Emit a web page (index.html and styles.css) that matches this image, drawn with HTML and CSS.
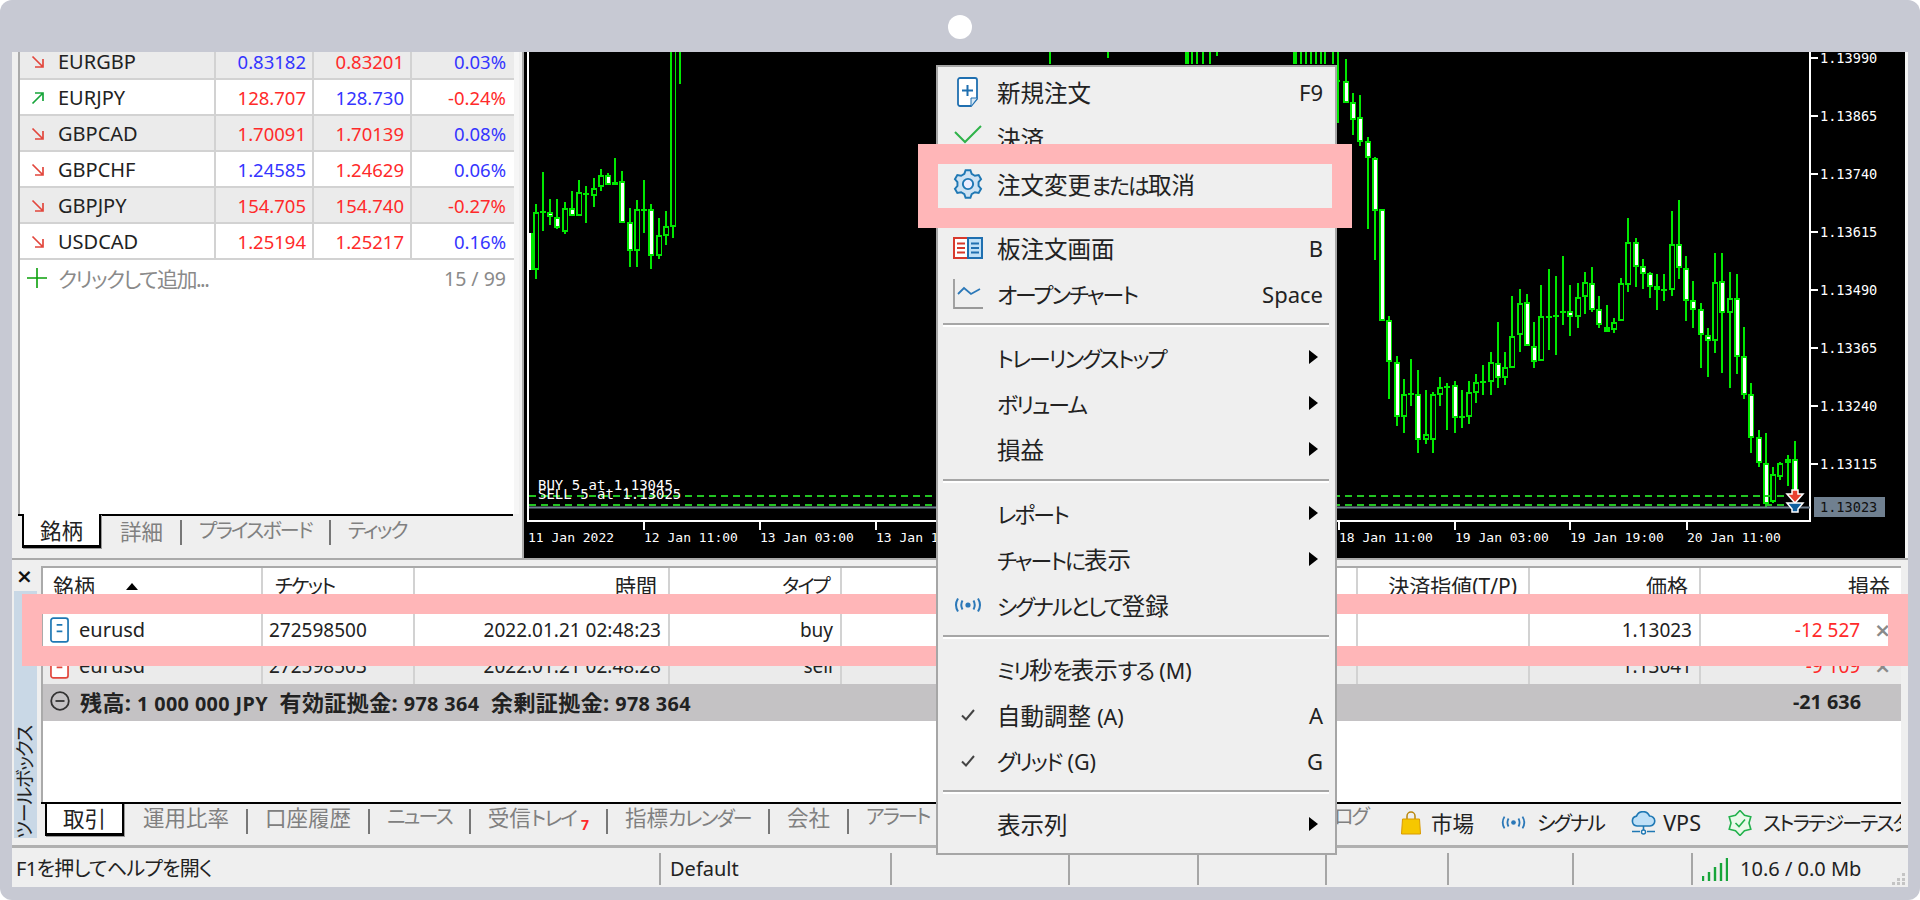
FILE: index.html
```html
<!DOCTYPE html>
<html lang="ja">
<head>
<meta charset="utf-8">
<title>MetaTrader 5</title>
<link rel="stylesheet" href="styles.css">
</head>
<body>
<svg class="defs" width="0" height="0">
  <symbol id="i-down" viewBox="0 0 14 14"><path d="M1.5 1.5L12 12M12 4v8H4" fill="none" stroke="#e2473d" stroke-width="1.7"/></symbol>
  <symbol id="i-up" viewBox="0 0 14 14"><path d="M1.5 12.5L12 2M4 2h8v8" fill="none" stroke="#17a53a" stroke-width="1.7"/></symbol>
  <symbol id="i-signal" viewBox="0 0 30 16"><path d="M5 1.5Q1 8 5 14.5M9.5 3.5Q7 8 9.5 12.5M20.500 3.500Q23 8 20.500 12.500M25 1.500Q29 8 25 14.500" fill="none" stroke="#2b78b8" stroke-width="2"/><circle cx="15" cy="8" r="2.600" fill="#2b78b8"/></symbol>
</svg>

<div class="frame">
  <div class="camera"></div>
  <div class="window">
    <div class="upper">
      <div class="market">
        <div class="mlist">
          <div class="mrow alt"><div class="mname"><svg class="arrow"><use href="#i-down"/></svg>EURGBP</div><div class="blue">0.83182</div><div class="red">0.83201</div><div class="blue">0.03%</div></div>
          <div class="mrow"><div class="mname"><svg class="arrow"><use href="#i-up"/></svg>EURJPY</div><div class="red">128.707</div><div class="blue">128.730</div><div class="red">-0.24%</div></div>
          <div class="mrow alt"><div class="mname"><svg class="arrow"><use href="#i-down"/></svg>GBPCAD</div><div class="red">1.70091</div><div class="red">1.70139</div><div class="blue">0.08%</div></div>
          <div class="mrow"><div class="mname"><svg class="arrow"><use href="#i-down"/></svg>GBPCHF</div><div class="blue">1.24585</div><div class="red">1.24629</div><div class="blue">0.06%</div></div>
          <div class="mrow alt"><div class="mname"><svg class="arrow"><use href="#i-down"/></svg>GBPJPY</div><div class="red">154.705</div><div class="red">154.740</div><div class="red">-0.27%</div></div>
          <div class="mrow"><div class="mname"><svg class="arrow"><use href="#i-down"/></svg>USDCAD</div><div class="red">1.25194</div><div class="red">1.25217</div><div class="blue">0.16%</div></div>
          <div class="madd">
            <svg class="plus" viewBox="0 0 20 20"><path d="M10 0v20M0 10h20" stroke="#0aa00a" stroke-width="1.600"/></svg>
            <span class="add-text">クリックして追加...</span>
            <span class="count">15 / 99</span>
          </div>
        </div>
        <div class="tabs tabs-market">
          <div class="tab active">銘柄</div>
          <div class="tab">詳細</div><i class="sep"></i>
          <div class="tab kn">プライスボード</div><i class="sep"></i>
          <div class="tab kn">ティック</div>
        </div>
      </div>

      <div class="chart">
        <svg id="plot" viewBox="524 52 1381 506" width="1381" height="506">
          <g id="candles"></g>
          <path d="M528 52V521H1810V52" fill="none" stroke="#fff" stroke-width="2"/>
          <path d="M644 521v9M760 521v9M876 521v9M992 521v9M1108 521v9M1224 521v9M1339 521v9M1455 521v9M1570 521v9M1687 521v9" stroke="#fff" stroke-width="2"/>
          <path d="M1810 58h8M1810 116h8M1810 174h8M1810 232h8M1810 290h8M1810 348h8M1810 406h8M1810 464h8" stroke="#fff" stroke-width="2"/>
          <path d="M529 496H1790" stroke="#22c422" stroke-width="2" stroke-dasharray="7 5"/>
          <path d="M529 505H1790" stroke="#22c422" stroke-width="2" stroke-dasharray="7 5"/>
          <path d="M529 507.500H1810" stroke="#708090" stroke-width="2"/>
          <g class="orders">
            <text x="538" y="490">BUY 5 at 1.13045</text>
            <text x="538" y="499">SELL 5 at 1.13025</text>
          </g>
          <path d="M1792 490h6v4h5l-8 9-8-9h5z" fill="#e8402f" stroke="#fff" stroke-width="1.500"/>
          <path d="M1787 503h16l-5 6v3h-6v-3z" fill="#0f5f9e" stroke="#fff" stroke-width="1.500"/>
          <g class="dates">
            <text x="528" y="542">11 Jan 2022</text>
            <text x="644" y="542">12 Jan 11:00</text>
            <text x="760" y="542">13 Jan 03:00</text>
            <text x="876" y="542">13 Jan 19:00</text>
            <text x="1339" y="542">18 Jan 11:00</text>
            <text x="1455" y="542">19 Jan 03:00</text>
            <text x="1570" y="542">19 Jan 19:00</text>
            <text x="1687" y="542">20 Jan 11:00</text>
          </g>
          <g class="prices">
            <text x="1820" y="63">1.13990</text>
            <text x="1820" y="121">1.13865</text>
            <text x="1820" y="179">1.13740</text>
            <text x="1820" y="237">1.13615</text>
            <text x="1820" y="295">1.13490</text>
            <text x="1820" y="353">1.13365</text>
            <text x="1820" y="411">1.13240</text>
            <text x="1820" y="469">1.13115</text>
          </g>
          <rect x="1814" y="497" width="71" height="20" fill="#708090"/>
          <text class="bid" x="1820" y="512">1.13023</text>
        </svg>
      </div>
    </div>

    <div class="toolbox">
      <div class="side">
        <div class="close">×</div>
        <div class="strip"><span>ツールボックス</span></div>
      </div>
      <div class="main">
        <div class="table">
          <div class="cols thead">
            <div class="left sort">銘柄<i class="tri"></i></div>
            <div class="left ticket kn">チケット</div>
            <div>時間</div>
            <div class="kn">タイプ</div>
            <div></div><div></div><div></div>
            <div>決済指値(T/P)</div>
            <div>価格</div>
            <div class="head-pl">損益</div>
          </div>
          <div class="cols trow">
            <div class="left symbol"><svg class="doc" viewBox="0 0 20 27"><rect x="1" y="1" width="18" height="25" rx="2.500" fill="#fff" stroke="#1f78b4" stroke-width="1.800"/><path d="M7 8h6M7 15h6" stroke="#1f78b4" stroke-width="1.800"/></svg>eurusd</div>
            <div class="left">272598500</div>
            <div>2022.01.21 02:48:23</div>
            <div>buy</div>
            <div></div><div></div><div></div><div></div>
            <div>1.13023</div>
            <div class="pl"><span class="red">-12 527</span><span class="del">×</span></div>
          </div>
          <div class="cols trow alt">
            <div class="left symbol"><svg class="doc" viewBox="0 0 20 27"><rect x="1" y="1" width="18" height="25" rx="2.500" fill="#fff" stroke="#e2473d" stroke-width="1.800"/><path d="M7 8h6M7 15h6" stroke="#e2473d" stroke-width="1.800"/></svg>eurusd</div>
            <div class="left">272598503</div>
            <div>2022.01.21 02:48:28</div>
            <div>sell</div>
            <div></div><div></div><div></div><div></div>
            <div>1.13041</div>
            <div class="pl"><span class="red">-9 109</span><span class="del">×</span></div>
          </div>
          <div class="summary">
            <svg class="minus" viewBox="0 0 20 20"><circle cx="10" cy="10" r="8.800" fill="none" stroke="#333" stroke-width="1.800"/><path d="M5.500 10h9" stroke="#333" stroke-width="1.800"/></svg>
            <span class="sum-text"><span class="jp">残高:</span> 1 000 000 JPY <span class="jp gap">有効証拠金:</span> 978 364 <span class="jp gap">余剰証拠金:</span> 978 364</span>
            <span class="total">-21 636</span>
          </div>
        </div>
        <div class="tabs tabs-tool">
          <div class="tabs-left">
            <div class="tab active">取引</div>
            <div class="tab">運用比率</div><i class="sep"></i>
            <div class="tab">口座履歴</div><i class="sep"></i>
            <div class="tab kn">ニュース</div><i class="sep"></i>
            <div class="tab">受信<span class="kn">トレイ</span><sub class="badge">7</sub></div><i class="sep"></i>
            <div class="tab">指標<span class="kn">カレンダー</span></div><i class="sep"></i>
            <div class="tab">会社</div><i class="sep"></i>
            <div class="tab kn">アラート</div>
          </div>
          <div class="tab tab-log kn">ログ</div>
          <div class="dock">
            <div class="dock-item">
              <svg class="ic-bag" viewBox="0 0 20 24"><path d="M6 9V5a4 4 0 0 1 8 0v4" fill="none" stroke="#b8860b" stroke-width="1.500"/><path d="M1.500 8h17l1 15H.5z" fill="#f6c700" stroke="#d99a00"/></svg>
              市場
            </div>
            <div class="dock-item">
              <svg class="ic-signal"><use href="#i-signal"/></svg>
              <span class="kn">シグナル</span>
            </div>
            <div class="dock-item dock-vps">
              <svg class="ic-cloud" viewBox="0 0 27 24"><path d="M7 15a5 5 0 0 1-.500-9.900A7 7 0 0 1 19.500 5a5 5 0 0 1 .500 10z" fill="#bfe0f7" stroke="#1f78b4" stroke-width="1.600"/><path d="M13.500 15v5M2 20.500h8M17 20.500h8" stroke="#1f78b4" stroke-width="1.600"/><circle cx="13.500" cy="21" r="2" fill="#fff" stroke="#1f78b4" stroke-width="1.400"/></svg>
              VPS
            </div>
            <div class="dock-item">
              <svg class="ic-star" viewBox="0 0 26 26"><polygon points="13,.5 17.500,5.200 23.800,6.750 22,13 23.800,19.250 17.500,20.800 13,25.500 8.500,20.800 2.200,19.250 4,13 2.200,6.750 8.500,5.200" fill="#eaf9ea" stroke="#22b14c" stroke-width="1.600"/><path d="M8.500 13l3.500 3.500 6-7" fill="none" stroke="#22b14c" stroke-width="1.600"/></svg>
              <span class="kn">ストラテジーテスター</span>
            </div>
          </div>
        </div>
      </div>
    </div>

    <div class="status">
      <div class="cell c1">F1を押してヘルプを開く</div>
      <div class="cell c2">Default</div>
      <div class="cell c3"></div>
      <div class="cell c4"></div>
      <div class="cell c4"></div>
      <div class="cell c5"></div>
      <div class="cell c6"></div>
      <div class="cell c7"></div>
      <div class="cell c8">
        <svg class="bars" viewBox="0 0 26 24"><path d="M1 24v-5M7 24v-9M13 24v-14M19 24v-18M25 24V1" stroke="#17a53a" stroke-width="2.400"/></svg>
        10.6 / 0.0 Mb
        <svg class="grip" viewBox="0 0 14 14"><path d="M11 2h3v3h-3zM6 7h3v3H6zM11 7h3v3h-3zM1 11h3v3H1zM6 11h3v3H6zM11 11h3v3h-3z" fill="#c4c4c4"/></svg>
      </div>
    </div>
  </div>

  <div class="mark mark-row"></div>

  <div class="menu">
    <div class="item">
      <svg class="mi" viewBox="0 0 30 30"><path d="M5 3a2 2 0 0 1 2-2h15a2 2 0 0 1 2 2v19l-6 7H7a2 2 0 0 1-2-2z" fill="#fff" stroke="#1f6fb0" stroke-width="1.800"/><path d="M24 21h-6v8" fill="#d8e8f4" stroke="#1f6fb0"/><path d="M14.500 8v11M9 13.500h11" stroke="#1f6fb0" stroke-width="2"/></svg>
      <span>新規注文</span><span class="key">F9</span>
    </div>
    <div class="item">
      <svg class="mi" viewBox="0 0 30 30"><path d="M2 9l10 10L28 3" fill="none" stroke="#2fb34a" stroke-width="2"/></svg>
      <span>決済</span>
    </div>
    <div class="item">
      <svg class="mi" viewBox="0 0 28 28"><polygon points="10.580,4.600 11.740,1.200 16.260,1.200 17.420,4.600 20.430,6.340 23.960,5.640 26.200,9.550 23.850,12.260 23.850,15.740 26.200,18.450 23.960,22.360 20.430,21.660 17.420,23.400 16.260,26.800 11.740,26.800 10.580,23.400 7.570,21.660 4.040,22.360 1.800,18.450 4.150,15.740 4.150,12.260 1.800,9.550 4.040,5.640 7.570,6.340" fill="#cfe3f3" stroke="#1f78b4" stroke-width="1.800"/><circle cx="14" cy="14" r="4.800" fill="#eef" stroke="#1f78b4" stroke-width="1.800"/></svg>
      <span>注文変更<span class="kn">または</span>取消</span>
    </div>
    <div class="line"></div>
    <div class="item">
      <svg class="mi mi-board" viewBox="0 0 30 22"><rect x="1" y="1" width="14" height="20" fill="#fff" stroke="#d8392c" stroke-width="2"/><rect x="15" y="1" width="14" height="20" fill="#bfe0f7" stroke="#1f6fb0" stroke-width="2"/><path d="M4 6.500h8M4 11h8M4 15.500h8" stroke="#d8392c" stroke-width="2"/><path d="M18 6.500h8M18 11h8M18 15.500h8" stroke="#1f6fb0" stroke-width="2"/></svg>
      <span>板注文画面</span><span class="key">B</span>
    </div>
    <div class="item">
      <svg class="mi" viewBox="0 0 30 30"><path d="M1 0v29h29" fill="none" stroke="#999" stroke-width="1.800"/><path d="M5 15l6-6 7 6 9-5" fill="none" stroke="#2b78b8" stroke-width="1.800"/></svg>
      <span class="kn">オープンチャート</span><span class="key">Space</span>
    </div>
    <div class="line"></div>
    <div class="item"><i class="mi"></i><span class="kn">トレーリングストップ</span><i class="more"></i></div>
    <div class="item"><i class="mi"></i><span class="kn">ボリューム</span><i class="more"></i></div>
    <div class="item"><i class="mi"></i><span>損益</span><i class="more"></i></div>
    <div class="line"></div>
    <div class="item"><i class="mi"></i><span class="kn">レポート</span><i class="more"></i></div>
    <div class="item"><i class="mi"></i><span><span class="kn">チャートに</span>表示</span><i class="more"></i></div>
    <div class="item">
      <svg class="mi mi-signal"><use href="#i-signal"/></svg>
      <span><span class="kn">シグナルとして</span>登録</span>
    </div>
    <div class="line"></div>
    <div class="item"><i class="mi"></i><span><span class="kn">ミリ</span>秒<span class="kn">を</span>表示<span class="kn">する</span> <em>(M)</em></span></div>
    <div class="item">
      <svg class="mi mi-check" viewBox="0 0 14 12"><path d="M1 6.500l4 4L13 1" fill="none" stroke="#444" stroke-width="2"/></svg>
      <span>自動調整 <em>(A)</em></span><span class="key">A</span>
    </div>
    <div class="item">
      <svg class="mi mi-check" viewBox="0 0 14 12"><path d="M1 6.500l4 4L13 1" fill="none" stroke="#444" stroke-width="2"/></svg>
      <span><span class="kn">グリッド</span> <em>(G)</em></span><span class="key">G</span>
    </div>
    <div class="line"></div>
    <div class="item"><i class="mi"></i><span>表示列</span><i class="more"></i></div>
  </div>

  <div class="mark mark-item"></div>
</div>
<script src="chart.js"></script>
</body>
</html>
```

FILE: styles.css
```css
* {box-sizing: border-box;}
html, body {margin: 0; height: 100%;}
body {
  background: #fff;
  color: #222;
  font-family: "Noto Sans", "Noto Sans CJK JP", sans-serif;
  font-size: 18.5px;
  font-feature-settings: "palt";
  overflow: hidden;
}
.defs {position: absolute;}
i, em {font-style: normal;}
.frame {position: relative; width: 1920px; height: 900px; padding: 52px 12px 13px; background: #c7c9d3; border-radius: 12px; overflow: hidden;}
.camera {position: absolute; left: 948px; top: 15px; width: 24px; height: 24px; border-radius: 50%; background: #fff;}
.window {display: flex; flex-direction: column; height: 835px; background: #efefef; overflow: hidden;}
.jp {font-size: 22px;}
.kn {font-size: .93em; letter-spacing: -.09em;}
.red {color: #ff2a2a;}
.blue {color: #3535ff;}

/* upper part */
.upper {display: flex; height: 508px; border-bottom: 2px solid #aaa;}
.market {display: flex; flex-direction: column; width: 512px; padding-left: 6px; border-right: 2px solid #aaa;}
.mlist {flex: 1; width: 501px; margin-top: -8px; background: #fff; border-left: 2px solid #aaa; border-right: 5px solid #f6f6f6;}
.mrow {display: grid; grid-template-columns: 196px 98px 98px 102px; height: 36px; border-bottom: 2px solid #d2d2d2; line-height: 36px; text-align: right;}
.mrow > div {padding-right: 6px; border-right: 2px solid #d2d2d2;}
.mrow > div:last-child {border-right: 0; padding-right: 8px;}
.mrow.alt {background: #ebebeb;}
.mrow .mname {display: flex; align-items: center; padding-left: 11px; text-align: left; font-size: 20px;}
.arrow {width: 14px; height: 14px; margin-right: 13px;}
.madd {display: flex; align-items: center; height: 36px; padding-left: 7px; color: #8a8a8a;}
.plus {width: 20px; height: 20px; margin-right: 11px;}
.add-text {font-size: 21px; letter-spacing: -1.5px;}
.count {margin-left: auto; padding-right: 8px; font-size: 19.5px;}

/* tabs */
.tabs {display: flex; align-items: center; border-top: 2px solid #000; color: #808080; font-size: 21.5px;}
.tab {white-space: nowrap;}
.tab.active {display: flex; align-items: center; justify-content: center; width: 79px; height: 34px; margin: -2px 2px 0 0; background: #fff; color: #222; border: 2px solid #000; border-top: 0; border-bottom-width: 3px; box-shadow: 1px 1px 0 #999;}
.sep {flex: none; width: 2px; height: 25px; background: #777;}
.tabs-market {gap: 17px; width: 495px; height: 39px; margin-bottom: 5px; padding-left: 4px; align-items: flex-start;}
.tabs-market .tab:not(.active) {margin-top: -1px;}
.tabs-market .sep {margin-top: 4px;}

/* chart */
.chart {flex: 1; background: #000; border-right: 3px solid #f4f4f4; overflow: hidden;}
#plot {display: block;}
#plot text {fill: #fff; font-family: "DejaVu Sans Mono", monospace;}
.orders text {font-size: 14px;}
.dates text {font-size: 13px;}
.prices text {font-size: 13.6px;}
#plot .bid {fill: #111; font-size: 13.6px;}

/* toolbox */
.toolbox {display: flex; flex: 1; min-height: 0; padding-top: 6px; border-bottom: 3px solid #b0b0b0;}
.side {display: flex; flex-direction: column; width: 29px; padding-left: 2px;}
.close {height: 25px; padding-right: 6px; font-family: "DejaVu Sans", sans-serif; font-size: 20px; font-weight: bold; line-height: 20px; text-align: center; color: #111;}
.strip {display: flex; justify-content: center; align-items: flex-start; width: 23px; height: 247px; background: #c9d8e6;}
.strip span {writing-mode: vertical-rl; text-orientation: sideways; transform: rotate(180deg); font-size: 19px; letter-spacing: -1.2px; line-height: 23px; padding-bottom: 5px; margin-top: auto;}
.main {display: flex; flex-direction: column; width: 1860px;}
.table {flex: 1; background: #fff; border: 2px solid #aaa; border-bottom: 0; border-right: 0;}
.cols {display: grid; grid-template-columns: 220px 152px 255px 172px 171px 172px 173px 172px 171px 200px; text-align: right;}
.cols > div {padding-right: 7px; border-right: 2px solid #d2d2d2;}
.cols > div:last-child {border-right: 0;}
.cols > .left {text-align: left; padding-left: 6px;}
.thead {height: 44px; font-size: 21px; line-height: 36px;}
.thead > div {padding-right: 11px;}
.thead > .sort {position: relative; padding-left: 10px;}
.thead > .ticket {padding-left: 12px;}
.tri {position: absolute; left: 83px; top: 15px; border: 6px solid transparent; border-top: 0; border-bottom: 7px solid #000;}
.trow {height: 36px; font-size: 19px; line-height: 36px;}
.trow.alt {background: #ebebeb;}
.cols > .symbol {display: flex; align-items: center; padding-left: 7px; font-size: 20px;}
.doc {width: 19px; height: 26px; margin-right: 10px;}
.cols > .pl {display: flex; justify-content: flex-end; padding-right: 10px;}
.del {margin-left: 14px; color: #8a8a8a; font-family: "DejaVu Sans", sans-serif; font-size: 20px; font-weight: bold;}
.head-pl {padding-right: 12px;}
.summary {position: relative; display: flex; align-items: center; height: 37px; padding: 0 0 3px 7px; background: #c4c2c4; font-size: 19.8px; font-weight: 700;}
.minus {width: 20px; height: 20px; margin-right: 10px;}
.sum-text {white-space: nowrap; letter-spacing: .4px;}
.summary .gap {margin-left: 6px;}
.total {position: absolute; right: 40px;}
.tabs-tool {height: 38px; margin-bottom: 5px; gap: 0; align-items: flex-start; overflow: hidden;}
.tabs-left {display: flex; flex: none; gap: 17px; width: 1293px; padding-left: 4px; height: 36px; align-items: flex-start;}
.tabs-left .tab:not(.active), .tab-log {margin-top: -3px;}
.tabs-left .sep {margin-top: 5px;}
.badge {color: #ff2a2a; font-size: 14px; font-weight: bold; vertical-align: -4px; line-height: 0; margin-left: 5px;}
.tab-log {margin-right: 33px;}
.dock {display: flex; gap: 26px; color: #222; font-size: 21.5px; padding-top: 3px;}
.dock-item {display: flex; flex: none; align-items: center; gap: 10px;}
.dock-vps {gap: 6px;}
.ic-bag {width: 20px; height: 24px;}
.ic-signal {width: 27px; height: 15px;}
.ic-cloud {width: 27px; height: 24px;}
.ic-star {width: 26px; height: 26px;}

/* status bar */
.status {display: flex; flex: none; height: 39px; padding-top: 5px; font-size: 20px;}
.cell {height: 32px; line-height: 32px; padding-left: 9px; border-left: 2px solid #a6a6a6; white-space: nowrap;}
.c1 {width: 647px; padding-left: 4px; border-left: 0; letter-spacing: -.7px;}
.c2 {width: 231px;}
.c3 {width: 178px;}
.c4 {width: 128.500px;}
.c5 {width: 122px;}
.c6 {width: 125px;}
.c7 {width: 119px;}
.c8 {display: flex; align-items: center; flex: 1; position: relative;}
.bars {width: 26px; height: 24px; margin-right: 12px;}
.grip {position: absolute; right: 3px; bottom: 0; width: 14px; height: 14px;}

/* context menu and marks */
.menu {position: absolute; left: 936px; top: 65px; z-index: 2; width: 401px; height: 790px; padding-top: 2px; background: #efefef; border: 2px solid #a6a6a6; font-size: 23.5px;}
.item {display: flex; align-items: center; height: 45.900px; padding-right: 12px; white-space: nowrap;}
.item em {font-size: 21.5px;}
.mi {flex: none; width: 30px; height: 30px; margin: 0 14px 0 15px;}
.mi-board {height: 22px;}
.mi-signal {height: 16px;}
.mi-check {width: 14px; height: 12px; margin: 0 22px 0 23px;}
.key {margin-left: auto; font-size: 22px;}
.more {margin-left: auto; margin-right: 5px; border: 7px solid transparent; border-left: 9px solid #000; border-right: 0;}
.line {height: 2px; margin: 7px 6px 9px 5px; background: #a6a6a6; box-shadow: 0 2px 0 #fff;}
.mark {position: absolute; border: 20px solid #ffb6b8;}
.mark-row {left: 22px; top: 594px; z-index: 1; width: 1886px; height: 72px;}
.mark-item {left: 918px; top: 144px; z-index: 3; width: 434px; height: 84px;}
```

FILE: chart.js
```js
// each candle: wick top, wick bottom, body top, body bottom, fill (w white, b black, g solid, d doji)
var left = [
  [172,231,212,212,'d'],[199,225,212,217,'w'],[199,229,217,228,'w'],[202,234,208,232,'b'],[191,216,208,216,'w'],
  [180,216,192,216,'b'],[186,223,194,194,'d'],[178,207,188,196,'b'],[169,191,175,187,'b'],[173,185,175,185,'w'],
  [158,185,182,185,'g'],[171,223,181,223,'w'],[208,267,222,251,'w'],[200,267,209,251,'b'],[180,233,210,210,'d'],
  [204,269,209,256,'w'],[218,259,235,256,'b'],[211,245,226,236,'b'],[52,238,40,227,'b'],[52,84,0,0,'n']
];
var right = [
  [59,103,81,103,'w'],[93,135,102,120,'w'],[95,146,117,142,'w'],[137,229,141,158,'w'],[157,260,158,211,'w'],
  [209,321,209,321,'w'],[316,399,320,362,'w'],[356,426,362,417,'w'],[379,433,394,417,'b'],[359,406,394,394,'d'],
  [370,453,394,440,'w'],[390,444,434,440,'b'],[392,453,394,440,'b'],[377,406,387,395,'b'],[383,430,386,388,'g'],
  [381,433,385,418,'w'],[390,428,416,418,'g'],[381,424,392,417,'b'],[374,403,382,393,'b'],[365,395,382,382,'d'],
  [352,395,362,382,'b'],[322,388,363,378,'w'],[352,385,367,378,'b'],[296,368,336,368,'b'],[289,352,303,335,'b'],
  [294,346,302,346,'w'],[322,368,346,362,'w'],[285,361,316,361,'b'],[269,350,317,317,'d'],[276,355,316,316,'d'],
  [256,325,312,312,'d'],[285,336,311,317,'w'],[283,328,297,317,'b'],[272,314,282,297,'b'],[267,312,283,310,'w'],
  [296,328,309,325,'w'],[305,332,327,332,'g'],[318,333,322,330,'b'],[278,321,283,321,'b'],[218,292,242,285,'b'],
  [238,287,242,267,'w'],[259,289,266,274,'w'],[272,298,273,287,'w'],[274,310,286,290,'w'],[274,301,290,290,'d'],
  [211,296,244,290,'b'],[200,279,244,268,'w'],[256,321,268,301,'w'],[281,328,300,310,'w'],[303,368,309,335,'w'],
  [328,377,335,341,'w'],[253,353,282,341,'b'],[253,373,281,313,'w'],[272,388,298,313,'b'],[274,374,298,357,'w'],
  [327,399,356,395,'w'],[383,453,394,438,'w'],[430,467,437,463,'w'],[433,507,463,504,'w'],[467,503,474,502,'b'],
  [462,480,463,477,'b'],[455,486,459,463,'w'],[441,500,459,500,'w']
];
// tips of the bars that stick out above the menu
var tips = [[1049,64],[1107,58],[1185,64],[1187,64],[1191,64],[1196,64],[1202,64],[1209,64],[1216,56],
  [1293,64],[1295,64],[1300,64],[1305,64],[1310,64],[1315,64],[1320,64],[1324,64],[1332,64]];

var green = '#00e800';
var svg = '';
function rect(x, y, w, h, color) {
  svg += '<rect x="' + x + '" y="' + y + '" width="' + w + '" height="' + h + '" fill="' + color + '"/>';
}
function candle(cx, c) {
  var x = Math.round(cx);
  rect(x - 1, c[0], 2, c[1] - c[0], green);
  if (c[4] == 'n') return;
  if (c[4] == 'd') { rect(x - 3, c[2] - 1, 6, 2, green); return; }
  rect(x - 3, c[2], 6, c[3] - c[2], green);
  if (c[4] == 'g') return;
  if (c[3] - c[2] > 3) rect(x - 1, c[2] + 2, 3, c[3] - c[2] - 4, c[4] == 'w' ? '#fff' : '#000');
}

rect(529, 233, 2, 37, '#fff');
rect(531, 233, 2, 37, green);
candle(535.7, [204,279,212,270,'b']);
left.forEach(function (c, i) { candle(542.9 + 7.23 * i, c); });
right.forEach(function (c, i) { candle(1345.9 + 7.24 * i, c); });
rect(1337, 52, 2, 71, green);
rect(1334, 80, 6, 2, green);
tips.forEach(function (t) { rect(t[0], 52, 2, t[1] - 52, green); });

document.getElementById('candles').innerHTML = svg;
```
